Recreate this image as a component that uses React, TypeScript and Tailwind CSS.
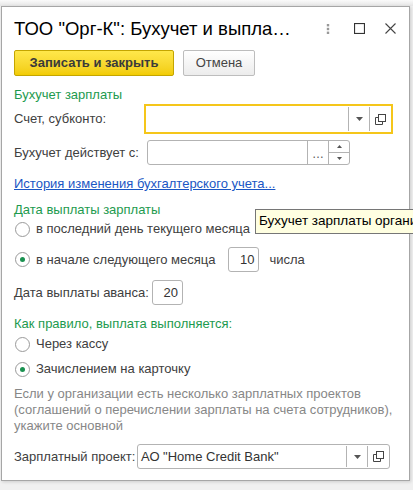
import React from "react";

function DropArrow() {
  return (
    <svg width="7" height="4" viewBox="0 0 7 4">
      <path d="M0 0 H7 L3.5 4 Z" fill="#555" />
    </svg>
  );
}

function OpenIcon() {
  return (
    <svg width="11" height="11" viewBox="0 0 11 11" fill="none" stroke="#444" strokeWidth="1">
      <rect x="3.5" y="0.5" width="7" height="7" />
      <path d="M0.5 3.5 V10.5 H7.5 V7.5" />
      <path d="M0.5 3.5 H3.5" />
    </svg>
  );
}

function Radio({ checked, label }: { checked?: boolean; label: string }) {
  return (
    <div className="flex items-center h-[20px]">
      <span className="ml-[1px] w-[15px] h-[15px] rounded-full border border-[#9a9a9a] bg-white flex items-center justify-center">
        {checked && <span className="w-[5px] h-[5px] rounded-full bg-[#1a9150]" />}
      </span>
      <span className="ml-[6px] text-[13px] text-[#404040]">{label}</span>
    </div>
  );
}

function SelectField({ value, w, focused }: { value?: string; w: string; focused?: boolean }) {
  return (
    <div
      className={`${w} flex items-stretch bg-white ${
        focused ? "h-[30px] border-2 border-[#f5c61a]" : "h-[25px] border border-[#b3b3b3] rounded-[3px]"
      }`}
    >
      <div className="flex-1 flex items-center pl-[3px] text-[13px] text-[#333] whitespace-nowrap overflow-hidden">
        {value}
      </div>
      <div className="w-[21px] border-l border-[#b3b3b3] my-[1px] flex items-center justify-center">
        <DropArrow />
      </div>
      <div className="w-[22px] border-l border-[#b3b3b3] my-[1px] flex items-center justify-center">
        <OpenIcon />
      </div>
    </div>
  );
}

function NumField({ value, w }: { value: string; w: string }) {
  return (
    <div className={`${w} h-[25px] border border-[#b3b3b3] rounded-[3px] bg-white flex items-center justify-end pr-[4px] text-[13px] text-[#333]`}>
      {value}
    </div>
  );
}

export default function App() {
  return (
    <div className="w-[413px] h-[490px] bg-[#f0f0f0] relative overflow-hidden font-['Liberation_Sans',Arial,sans-serif]">
      <div className="absolute left-0 top-0 w-[413px] h-[6px] bg-gradient-to-b from-[#fafafa] to-[#e6e6e6]" />
      <div className="ml-[1px] mt-[6px] w-[409px] h-[475px] bg-white border border-[#a6a6a6] shadow-[1px_1px_3px_rgba(0,0,0,0.15)] pl-[12px] pr-[12px] relative">
        {/* header */}
        <div className="h-[43px] flex items-center">
          <div className="flex-1 text-[18.5px] text-black whitespace-nowrap pt-[1px]">
            ТОО "Орг-К": Бухучет и выпла…
          </div>
          <div className="flex items-center">
            <svg width="4" height="12" viewBox="0 0 4 12" className="mr-[24px]">
              <rect x="0.8" y="1" width="2.4" height="2.4" fill="#999" />
              <rect x="0.8" y="4.8" width="2.4" height="2.4" fill="#999" />
              <rect x="0.8" y="8.6" width="2.4" height="2.4" fill="#999" />
            </svg>
            <svg width="11" height="11" viewBox="0 0 11 11" className="mr-[20px]">
              <rect x="0.5" y="0.5" width="10" height="10" fill="none" stroke="#333" strokeWidth="1.2" />
            </svg>
            <svg width="11" height="11" viewBox="0 0 11 11" className="mr-[1px]">
              <path d="M0.5 0.5 L10.5 10.5 M10.5 0.5 L0.5 10.5" stroke="#444" strokeWidth="1.1" />
            </svg>
          </div>
        </div>

        {/* buttons */}
        <div className="flex items-center gap-[9px]">
          <button className="w-[160px] h-[26px] rounded-[2px] border border-[#c4a500] bg-gradient-to-b from-[#ffe84a] to-[#f2cc00] text-[13px] font-bold text-[#3a3a3a]">
            Записать и закрыть
          </button>
          <button className="w-[72px] h-[26px] rounded-[2px] border border-[#bdbdbd] bg-gradient-to-b from-white to-[#ececec] text-[13px] text-[#444]">
            Отмена
          </button>
        </div>

        <div className="mt-[11px] leading-[16px] text-[13px] text-[#1d9a4e]">Бухучет зарплаты</div>

        <div className="mt-[1px] flex items-center">
          <div className="w-[130px] text-[13px] text-[#404040]">Счет, субконто:</div>
          <SelectField w="w-[249px]" focused />
        </div>

        <div className="mt-[6px] flex items-center">
          <div className="w-[133px] text-[13px] text-[#404040]">Бухучет действует с:</div>
          <div className="w-[203px] h-[25px] border border-[#b3b3b3] rounded-[3px] bg-white flex items-stretch">
            <div className="flex-1" />
            <div className="w-[21px] border-l border-[#b3b3b3] flex items-end justify-center pb-[6px] text-[12px] leading-[8px] text-[#555]">
              …
            </div>
            <div className="w-[21px] border-l border-[#b3b3b3] flex flex-col">
              <div className="flex-1 flex items-center justify-center border-b border-[#b3b3b3]">
                <svg width="5" height="3" viewBox="0 0 5 3"><path d="M0 3 H5 L2.5 0 Z" fill="#555" /></svg>
              </div>
              <div className="flex-1 flex items-center justify-center">
                <svg width="5" height="3" viewBox="0 0 5 3"><path d="M0 0 H5 L2.5 3 Z" fill="#555" /></svg>
              </div>
            </div>
          </div>
        </div>

        <div className="mt-[11px] leading-[16px] text-[13px] text-[#1a56c4] underline">
          История изменения бухгалтерского учета...
        </div>

        <div className="mt-[10px] leading-[16px] text-[13px] text-[#1d9a4e]">Дата выплаты зарплаты</div>

        <div className="mt-[1px]">
          <Radio label="в последний день текущего месяца" />
        </div>

        <div className="mt-[8px] flex items-center h-[25px]">
          <Radio checked label="в начале следующего месяца" />
          <div className="ml-[13px]">
            <NumField value="10" w="w-[31px]" />
          </div>
          <span className="ml-[10px] text-[13px] text-[#404040]">числа</span>
        </div>

        <div className="mt-[8px] flex items-center">
          <div className="w-[138px] text-[13px] text-[#404040]">Дата выплаты аванса:</div>
          <NumField value="20" w="w-[31px]" />
        </div>

        <div className="mt-[11px] leading-[16px] text-[13px] text-[#1d9a4e]">
          Как правило, выплата выполняется:
        </div>

        <div className="mt-[2px]">
          <Radio label="Через кассу" />
        </div>
        <div className="mt-[5px]">
          <Radio checked label="Зачислением на карточку" />
        </div>

        <p className="mt-[7px] leading-[16px] text-[13px] text-[#878787]">
          Если у организации есть несколько зарплатных проектов (соглашений о перечислении зарплаты на счета сотрудников), укажите основной
        </p>

        <div className="mt-[10px] flex items-center">
          <div className="w-[123px] text-[13px] text-[#404040]">Зарплатный проект:</div>
          <SelectField w="w-[253px]" value={'АО "Home Credit Bank"'} />
        </div>
      </div>

      {/* tooltip */}
      <div className="absolute left-[255px] top-[209px] h-[25px] w-[170px] bg-[#ffffe1] border border-[#767676] pl-[3px] flex items-center text-[13.5px] text-black whitespace-nowrap">
        Бухучет зарплаты организации
      </div>
    </div>
  );
}
